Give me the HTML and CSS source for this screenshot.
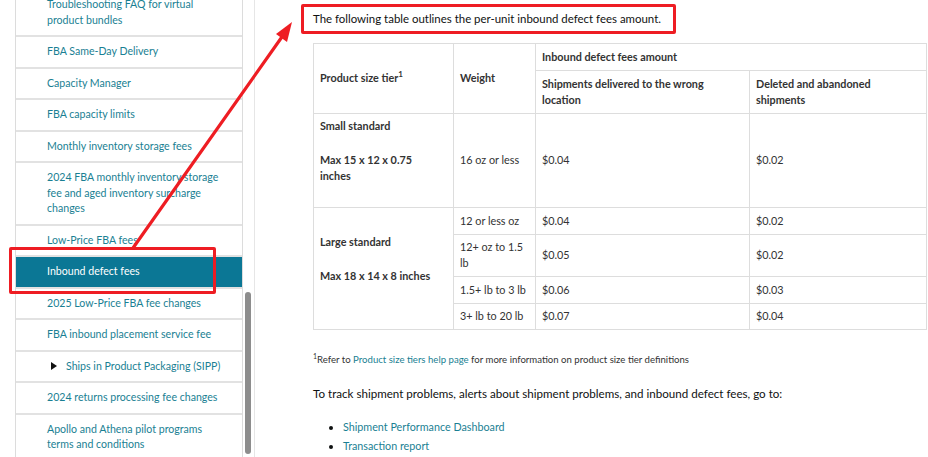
FILE: index.html
```html
<!DOCTYPE html>
<html lang="en">
<head>
<meta charset="utf-8">
<title>Inbound defect fees</title>
<link rel="stylesheet" href="styles.css">
</head>
<body>
<div class="page">
  <aside class="sidebar">
    <ul class="nav">
      <li class="nav-item">Troubleshooting FAQ for virtual product bundles</li>
      <li class="nav-item">FBA Same-Day Delivery</li>
      <li class="nav-item">Capacity Manager</li>
      <li class="nav-item">FBA capacity limits</li>
      <li class="nav-item">Monthly inventory storage fees</li>
      <li class="nav-item">2024 FBA monthly inventory storage fee and aged inventory surcharge changes</li>
      <li class="nav-item">Low-Price FBA fees</li>
      <li class="nav-item active">Inbound defect fees</li>
      <li class="nav-item">2025 Low-Price FBA fee changes</li>
      <li class="nav-item">FBA inbound placement service fee</li>
      <li class="nav-item sub"><span class="caret"></span>Ships in Product Packaging (SIPP)</li>
      <li class="nav-item">2024 returns processing fee changes</li>
      <li class="nav-item">Apollo and Athena pilot programs terms and conditions</li>
    </ul>
    <div class="scrollbar"><div class="thumb"></div></div>
  </aside>
  <main class="content">
    <p class="intro">The following table outlines the per-unit inbound defect fees amount.</p>
    <table class="fees">
      <colgroup>
        <col class="c1"><col class="c2"><col class="c3"><col class="c4">
      </colgroup>
      <thead>
        <tr>
          <th rowspan="2">Product size tier<sup>1</sup></th>
          <th rowspan="2">Weight</th>
          <th colspan="2">Inbound defect fees amount</th>
        </tr>
        <tr>
          <th>Shipments delivered to the wrong location</th>
          <th>Deleted and abandoned shipments</th>
        </tr>
      </thead>
      <tbody>
        <tr>
          <td class="tier"><p>Small standard</p><p>Max 15 x 12 x 0.75 inches</p></td>
          <td>16 oz or less</td>
          <td>$0.04</td>
          <td>$0.02</td>
        </tr>
        <tr>
          <td class="tier" rowspan="4"><p>Large standard</p><p>Max 18 x 14 x 8 inches</p></td>
          <td>12 or less oz</td>
          <td>$0.04</td>
          <td>$0.02</td>
        </tr>
        <tr>
          <td>12+ oz to 1.5 lb</td>
          <td>$0.05</td>
          <td>$0.02</td>
        </tr>
        <tr>
          <td>1.5+ lb to 3 lb</td>
          <td>$0.06</td>
          <td>$0.03</td>
        </tr>
        <tr>
          <td>3+ lb to 20 lb</td>
          <td>$0.07</td>
          <td>$0.04</td>
        </tr>
      </tbody>
    </table>
    <p class="footnote"><sup>1</sup>Refer to <a href="#">Product size tiers help page</a> for more information on product size tier definitions</p>
    <p class="track">To track shipment problems, alerts about shipment problems, and inbound defect fees, go to:</p>
    <ul class="links">
      <li><a href="#">Shipment Performance Dashboard</a></li>
      <li><a href="#">Transaction report</a></li>
    </ul>
  </main>
</div>
<div class="mark-box"></div>
<svg class="arrow" width="928" height="457" viewBox="0 0 928 457">
  <line x1="133" y1="248" x2="284" y2="34" stroke="#ee1d23" stroke-width="3.2" stroke-linecap="round"/>
  <polygon points="292,22 287,42 276,34" fill="#ee1d23"/>
</svg>
</body>
</html>
```
FILE: styles.css
```css
* { box-sizing: border-box; }
html, body { margin: 0; padding: 0; background: #fff; }
body {
  font-family: Lato, "Open Sans", Arial, sans-serif;
  color: #0f1111;
  width: 928px;
  height: 457px;
  overflow: hidden;
  position: relative;
}
.page {
  display: flex;
  height: 457px;
}
.sidebar {
  width: 255px;
  flex: none;
  display: flex;
  padding-left: 15px;
  overflow: hidden;
  border-right: 1px solid #e6e6e6;
}
.nav {
  list-style: none;
  margin: -10px 0 0;
  padding: 0;
  width: 228px;
  border-left: 1px solid #dcdcdc;
  border-right: 1px solid #dcdcdc;
}
.nav-item {
  font-size: 10.6px;
  line-height: 15.5px;
  color: #1a7f93;
  padding: 7px 20px 7px 31px;
  border-bottom: 2px solid #e2e2e2;
}
.nav-item.active {
  background: #0b7795;
  color: #fff;
}
.nav-item.sub {
  padding-left: 35px;
  display: flex;
  align-items: center;
}
.caret {
  width: 0;
  height: 0;
  border-top: 4px solid transparent;
  border-bottom: 4px solid transparent;
  border-left: 6px solid #111;
  margin-right: 9px;
}
.scrollbar {
  width: 11px;
  flex: none;
  padding: 292px 2px 3px 2px;
}
.thumb {
  height: 162px;
  width: 6px;
  border-radius: 3px;
  background: #8d8d8d;
}
.content {
  flex: 1;
  padding: 0 2px 0 58px;
  font-size: 11.5px;
}
.intro {
  display: inline-block;
  margin: 4px 0 0 -12px;
  padding: 3px 12px 3px 9px;
  border: 3px solid #ee1d23;
  border-radius: 2px;
  font-size: 11.45px;
  line-height: 18px;
}
.fees {
  margin-top: 9px;
  width: 613px;
  border-collapse: collapse;
  table-layout: fixed;
  font-size: 10.8px;
  color: #333;
}
.c1 { width: 140px; }
.c2 { width: 82px; }
.c3 { width: 214px; }
.c4 { width: 177px; }
.fees th, .fees td {
  border: 1px solid #dddddd;
  padding: 4.5px 6px 5px;
  line-height: 16px;
  text-align: left;
  vertical-align: middle;
}
.fees th { font-weight: 700; }
.fees th[colspan] { height: 27px; }
.fees sup { font-size: 8px; line-height: 0; vertical-align: 5px; }
.fees td.tier { font-weight: 700; padding-right: 14px; }
.tier p { margin: 0 0 18px; }
.footnote {
  margin: 23px 0 0;
  font-size: 9.6px;
  line-height: 14px;
  color: #333;
}
.footnote sup { font-size: 7px; vertical-align: 4px; line-height: 0; }
a { color: #1a7f93; text-decoration: none; }
.track {
  margin: 18px 0 0;
  font-size: 11.6px;
  line-height: 18px;
}
.links {
  margin: 14px 0 0;
  padding-left: 30px;
  font-size: 10.75px;
  line-height: 19px;
}
.mark-box {
  position: absolute;
  left: 9px;
  top: 247px;
  width: 207px;
  height: 47px;
  border: 3px solid #ee1d23;
  border-radius: 2px;
}
.arrow {
  position: absolute;
  left: 0;
  top: 0;
  pointer-events: none;
}
```
